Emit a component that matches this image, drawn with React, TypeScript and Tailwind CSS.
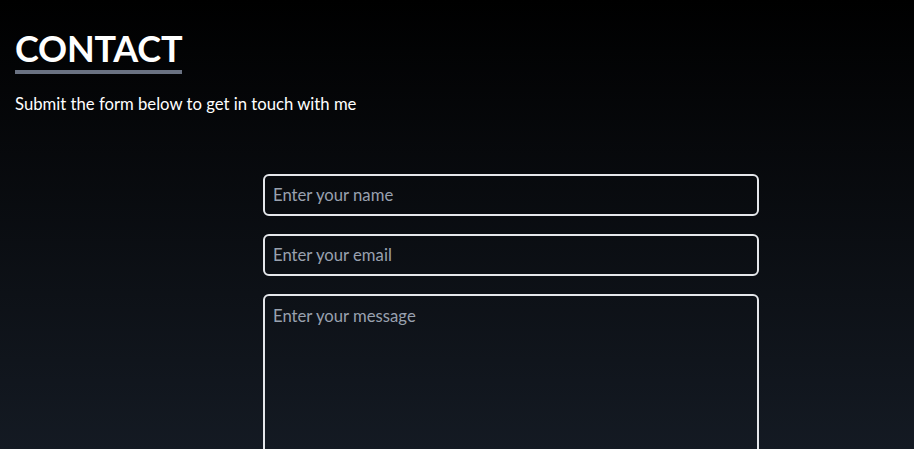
export default function App() {
  return (
    <div className="min-h-screen h-[449px] overflow-hidden bg-[linear-gradient(to_bottom,#000000,#141a23)] text-white" style={{ fontFamily: 'Lato, "Open Sans", sans-serif' }}>
      <div className="px-[15px] pt-[27px]">
        <h2 className="inline-block border-b-4 border-gray-500 text-[36px] font-bold leading-[42px] pb-[1px] tracking-[-0.2px]">CONTACT</h2>
        <p className="mt-[18px] text-[16.7px]">Submit the form below to get in touch with me</p>
      </div>
      <form className="ml-[263px] mt-[57px] flex w-[496px] flex-col gap-[18px]">
        <input placeholder="Enter your name" className="h-[42px] rounded-md border-2 border-gray-200 bg-transparent px-[8px] text-[16.7px] text-white placeholder-gray-400 outline-none" />
        <input placeholder="Enter your email" className="h-[42px] rounded-md border-2 border-gray-200 bg-transparent px-[8px] text-[16.7px] text-white placeholder-gray-400 outline-none" />
        <textarea placeholder="Enter your message" className="h-[200px] resize-none rounded-md border-2 border-gray-200 bg-transparent px-[8px] py-[8px] text-[16.7px] text-white placeholder-gray-400 outline-none" />
      </form>
    </div>
  );
}
